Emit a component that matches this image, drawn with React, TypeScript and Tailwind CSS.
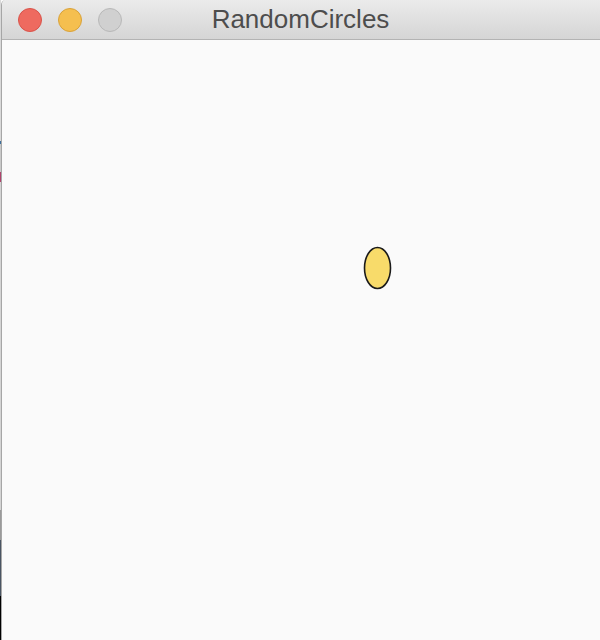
import React from 'react';

// desktop bleeding through the 1px gap on the left
const strip = [
  { h: 'h-[141px]', c: 'bg-[#d9d9d9]' },
  { h: 'h-[3px]', c: 'bg-[#3d6f9c]' },
  { h: 'h-[28px]', c: 'bg-[#c9c9c9]' },
  { h: 'h-[10px]', c: 'bg-[#b0436c]' },
  { h: 'h-[328px]', c: 'bg-[#d4d4d4]' },
  { h: 'h-[30px]', c: 'bg-[#9a9a9a]' },
  { h: 'h-[56px]', c: 'bg-[#4a5563]' },
  { h: 'flex-1', c: 'bg-black' },
];

const App = () => {
  return (
    <div className="flex w-[600px] h-[640px] bg-[#fafafa] overflow-hidden">
      <div className="flex flex-col w-[1px] h-full">
        {strip.map((s, i) => (
          <div key={i} className={`${s.h} ${s.c}`} />
        ))}
      </div>
      <div className="flex flex-col flex-1 border-l border-[#a6a6a6] rounded-tl-[5px] overflow-hidden">
        <div className="relative flex items-center h-[40px] bg-gradient-to-b from-[#ebebeb] to-[#d5d5d5] border-b border-[#b3b3b3]">
          <div className="flex items-center gap-[16px] pl-[16px]">
            <span className="w-[24px] h-[24px] rounded-full bg-[#ee6a5f] border border-[#d9534a]" />
            <span className="w-[24px] h-[24px] rounded-full bg-[#f5bf4f] border border-[#d9a23a]" />
            <span className="w-[24px] h-[24px] rounded-full bg-[#d0d0d0] border border-[#b8b8b8]" />
          </div>
          <div
            className="absolute inset-0 flex items-center justify-center text-[26px] leading-none text-[#4d4d4d] pr-[1px] pb-[1px]"
            style={{ fontFamily: '"Liberation Sans", Arial, sans-serif' }}
          >
            RandomCircles
          </div>
        </div>
        <div className="relative flex-1 bg-[#fafafa]">
          <svg className="absolute left-[360px] top-[205px]" width="34" height="48" viewBox="0 0 34 48">
            <ellipse cx="15.5" cy="23" rx="13" ry="20.5" fill="#f8db6a" stroke="#1a1a1a" strokeWidth="1.6" />
          </svg>
        </div>
      </div>
    </div>
  );
};

export default App;
